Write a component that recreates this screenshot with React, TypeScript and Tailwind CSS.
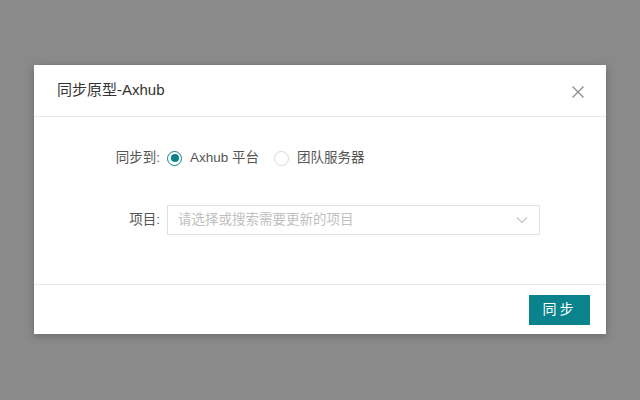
import React from "react";

const font = { fontFamily: '"Liberation Sans", "Noto Sans CJK SC", sans-serif' };

export default function App() {
  return (
    <div
      className="w-[640px] h-[400px] bg-[#8a8a8a] flex items-start justify-center pt-[65px]"
      style={font}
    >
      <div className="w-[572px] h-[269px] bg-white flex flex-col shadow-[0_2px_8px_rgba(0,0,0,0.25)]">
        <div className="h-[52px] border-b border-[#e8e8e8] flex items-center justify-between pl-[23px] pr-[21px]">
          <span className="text-[15px] text-[#333]">同步原型-Axhub</span>
          <svg width="14" height="14" viewBox="0 0 14 14" className="mt-[2px]">
            <path d="M1.5 1.5 L12.5 12.5 M12.5 1.5 L1.5 12.5" stroke="#8c8c8c" strokeWidth="1.3" fill="none" />
          </svg>
        </div>
        <div className="flex-1 flex flex-col pt-[26px] gap-[32px] text-[13.5px] text-[#555]">
          <div className="h-[30px] flex items-center">
            <div className="w-[133px] text-right pr-[7px]">同步到:</div>
            <label className="flex items-center">
              <span className="w-[15px] h-[15px] rounded-full border border-[#0a838c] flex items-center justify-center">
                <span className="w-[8px] h-[8px] rounded-full bg-[#0a838c]" />
              </span>
              <span className="ml-[8px]">Axhub 平台</span>
            </label>
            <label className="flex items-center ml-[15px]">
              <span className="w-[15px] h-[15px] rounded-full border border-[#d9d9d9]" />
              <span className="ml-[8px]">团队服务器</span>
            </label>
          </div>
          <div className="h-[30px] flex items-center">
            <div className="w-[133px] text-right pr-[7px]">项目:</div>
            <div className="w-[373px] h-[30px] border border-[#e0e0e0] flex items-center justify-between pl-[10px] pr-[11px]">
              <span className="text-[#bfbfbf]">请选择或搜索需要更新的项目</span>
              <svg width="12" height="8" viewBox="0 0 12 8">
                <path d="M1 1.5 L6 6.5 L11 1.5" stroke="#c4c4c4" strokeWidth="1.1" fill="none" />
              </svg>
            </div>
          </div>
        </div>
        <div className="h-[50px] border-t border-[#e8e8e8] flex items-center justify-end pr-[16px]">
          <button className="w-[61px] h-[30px] bg-[#0a838c] text-white text-[14px] tracking-[3px] flex items-center justify-center">
            同步
          </button>
        </div>
      </div>
    </div>
  );
}
